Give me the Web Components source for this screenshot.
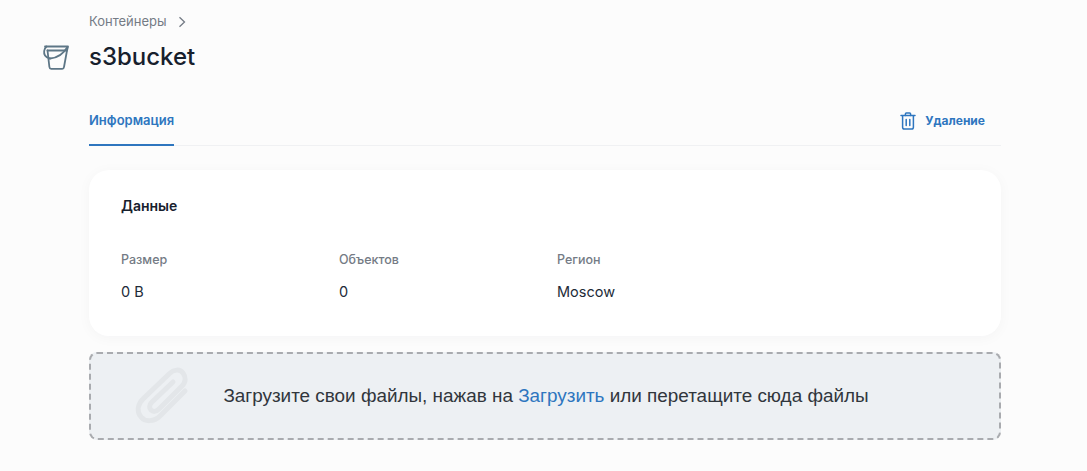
<!DOCTYPE html>
<html lang="ru">
<head>
<meta charset="utf-8">
<title>s3bucket</title>
<style>
  html, body { margin: 0; background: #fcfcfc; }
  body { font-family: Inter, Roboto, sans-serif; color: #18212e; }
</style>
</head>
<body>
<bucket-page>
  <page-header slot="header" crumb="Контейнеры" title="s3bucket"></page-header>
  <tab-bar slot="tabs" label="Информация" action="Удаление"></tab-bar>
  <info-card slot="card" title="Данные">
    <info-field label="Размер" value="0 B"></info-field>
    <info-field label="Объектов" value="0"></info-field>
    <info-field label="Регион" value="Moscow"></info-field>
  </info-card>
  <drop-zone slot="drop"></drop-zone>
</bucket-page>

<script>
const define =
  (name, css, html, render) =>
    customElements.define(name, class extends HTMLElement {
      connectedCallback() {
        if (this.shadowRoot) return;
        const attr = k => this.getAttribute(k) || '';
        this.attachShadow({ mode: 'open' }).innerHTML =
          `<style>${css}</style>${render ? render(attr) : html}`;
      }
    });

define('bucket-page', `
  :host { display: block; box-sizing: border-box; width: 1087px; height: 471px; padding: 0 86px 0 89px; overflow: hidden; }
`, `
  <slot name="header"></slot>
  <slot name="tabs"></slot>
  <slot name="card"></slot>
  <slot name="drop"></slot>
`);

define('page-header', `
  :host { display: block; position: relative; padding-top: 13px; height: 81px; box-sizing: border-box; }
  .crumb { display: flex; align-items: center; gap: 11px; height: 17px; font-size: 13px; line-height: 17px; color: #747b85; }
  h1 { margin: 12px 0 0; font-size: 24px; line-height: 30px; font-weight: 500; color: #17202d; }
  svg.bucket { position: absolute; left: -47px; top: 44px; }
`, '', attr => `
  <div class="crumb"><span>${attr('crumb')}</span>
    <svg width="8" height="12" viewBox="0 0 8 12" fill="none" stroke="#747b85" stroke-width="1.3"><path d="M1.5 1.2 6.5 6l-5 4.8"/></svg>
  </div>
  <h1>${attr('title')}</h1>
  <svg class="bucket" width="28" height="28" viewBox="0 0 28 28" fill="none" stroke="#5d7686" stroke-width="1.8" stroke-linejoin="round" stroke-linecap="round">
    <path d="M3 2.5H26L25 6.5H5.5"/>
    <path d="M4.5 2.5C1.8 5 1.5 9 3 11.5c1 1.6 3 2.6 5 3"/>
    <path d="M5.5 6.5 7.4 23c.1 1 .8 1.8 1.8 1.8h11c1 0 1.700-.8 1.800-1.800L25 6.500"/>
    <path d="M8 14.500C15 14 21 10.500 25.500 3"/>
  </svg>
`);

define('tab-bar', `
  :host { display: flex; justify-content: space-between; height: 65px; box-sizing: border-box; border-bottom: 1px solid #f0f1f3; margin-bottom: 24px; }
  .tab { display: flex; align-items: center; height: 65px; padding-top: 14px; box-sizing: border-box; border-bottom: 2px solid #2e76bf; font-size: 13px; font-weight: 600; color: #2e76bf; }
  .action { display: flex; align-items: center; gap: 9px; padding: 14px 16px 0 0; height: 65px; box-sizing: border-box; font-size: 12px; font-weight: 700; color: #2e76bf; }
`, '', attr => `
  <div class="tab">${attr('label')}</div>
  <div class="action">
    <svg width="16" height="18" viewBox="0 0 16 18" fill="none" stroke="#2e76bf" stroke-width="1.5" stroke-linecap="round" stroke-linejoin="round">
      <path d="M1 3.600h14"/>
      <path d="M5.400 3.400V2c0-.6.4-1 1-1h3.200c.6 0 1 .4 1 1v1.400"/>
      <path d="M2.600 3.800v11.400c0 1 .8 1.800 1.800 1.800h7.200c1 0 1.800-.8 1.800-1.800V3.800"/>
      <path d="M6.200 7.400v6M9.800 7.400v6"/>
    </svg>
    <span>${attr('action')}</span>
  </div>
`);

define('info-card', `
  :host { display: block; box-sizing: border-box; height: 166px; padding: 27px 32px 0; margin-bottom: 16px; background: #fff; border-radius: 20px; box-shadow: 0 2px 14px rgba(30, 40, 60, .035); }
  h2 { margin: 0 0 36px; font-size: 14px; line-height: 18px; font-weight: 600; color: #17202d; }
  .row { display: grid; grid-template-columns: 218px 218px 1fr; }
`, '', attr => `
  <h2>${attr('title')}</h2>
  <div class="row"><slot></slot></div>
`);

define('info-field', `
  :host { display: block; }
  .label { font-size: 12.500px; line-height: 18px; font-weight: 500; color: #747b85; }
  .value { margin-top: 14px; font-size: 14.500px; line-height: 18px; color: #222b38; }
`, '', attr => `
  <div class="label">${attr('label')}</div>
  <div class="value">${attr('value')}</div>
`);

define('drop-zone', `
  :host { display: flex; align-items: center; justify-content: center; position: relative; box-sizing: border-box; height: 88px; padding-left: 2px; background: #edf0f3; border: 2px dashed #a9abaf; border-radius: 8px; font-family: "Liberation Sans", Arial, sans-serif; font-size: 18.900px; color: #31363c; }
  a { color: #2e76bf; text-decoration: none; }
  svg { position: absolute; left: 44px; top: 13px; }
`, `
  <svg width="56" height="58" viewBox="0 0 56 58" fill="none" stroke="#e3e6e9" stroke-width="5" stroke-linecap="round" stroke-linejoin="round">
    <path d="M50 24 25 49C19 55 10 55 6 50S2 38 8 32L34 7c5-5 11-5 14-1s3 9-1 13L24 42c-3 3-6 3-8 1s-2-5 1-8L38 15"/>
  </svg>
  <span>Загрузите свои файлы, нажав на <a href="#">Загрузить</a> или перетащите сюда файлы</span>
`);
</script>
</body>
</html>
